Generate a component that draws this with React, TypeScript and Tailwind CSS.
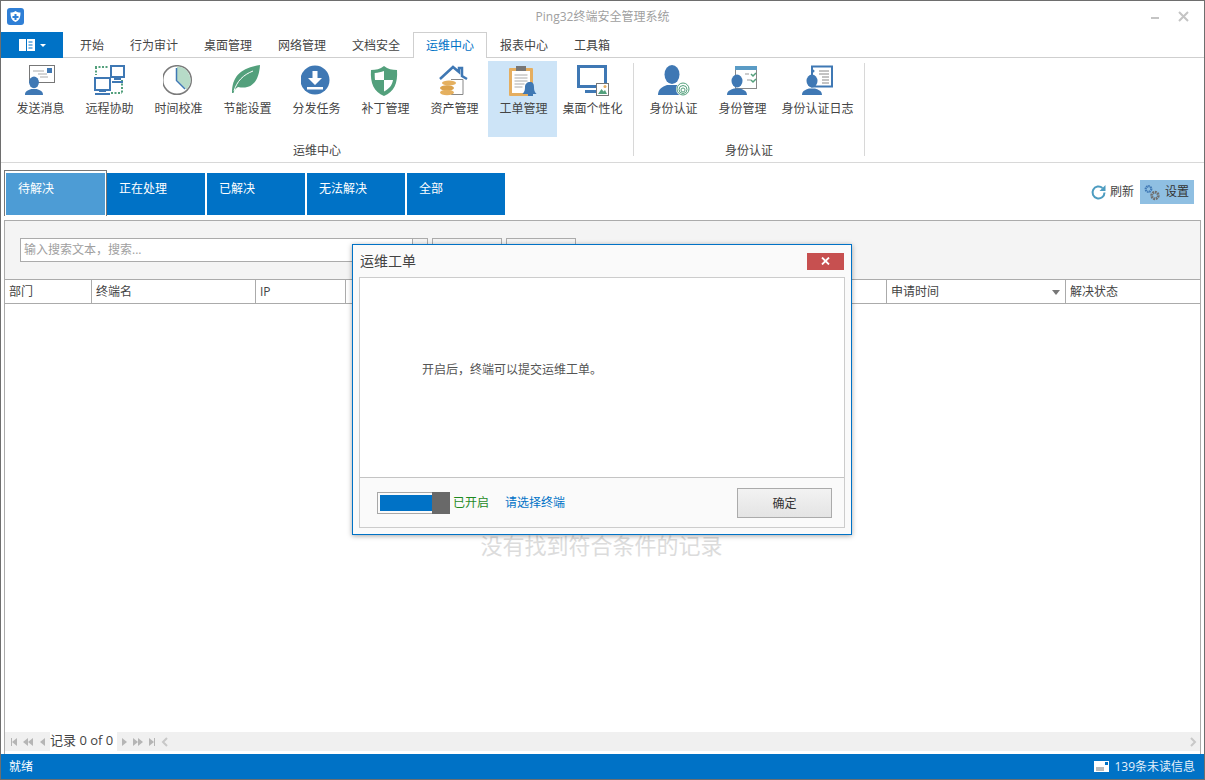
const FONT = "font-['Open_Sans','Noto_Sans_CJK_SC',sans-serif]";

const tabs = [
  { label: "开始", w: "w-[50px]" },
  { label: "行为审计", w: "w-[74px]" },
  { label: "桌面管理", w: "w-[74px]" },
  { label: "网络管理", w: "w-[74px]" },
  { label: "文档安全", w: "w-[74px]" },
  { label: "运维中心", w: "w-[74px]", active: true },
  { label: "报表中心", w: "w-[74px]" },
  { label: "工具箱", w: "w-[62px]" },
];

const BLUE = "#3f78b4";
const GREEN = "#53a07c";

function Person({ x = 0, y = 0, s = 1 }: { x?: number; y?: number; s?: number }) {
  return (
    <g transform={`translate(${x} ${y}) scale(${s})`}>
      <ellipse cx="10" cy="7" rx="5.500" ry="6.500" fill={BLUE} />
      <path d="M0 21c0-4 3-5 7-6.500h6c4 1.500 7 2.500 7 6.500z" fill={BLUE} />
    </g>
  );
}

function IconMessage() {
  return (
    <svg width="32" height="32" viewBox="0 0 32 32">
      <rect x="4.500" y="0.500" width="25" height="17" fill="#fff" stroke="#777" />
      <rect x="22" y="3" width="5" height="5" fill={BLUE} />
      <path d="M8 6h11M13 9h9M15 12h8" stroke="#aaa" />
      <Person x="0" y="11" s={0.9} />
    </svg>
  );
}

function IconRemote() {
  return (
    <svg width="32" height="32" viewBox="0 0 32 32">
      <path d="M1 2h14M2 2v8M28 15v14M17 28h11" stroke={GREEN} strokeWidth="2" strokeDasharray="2 1.500" fill="none" />
      <rect x="17" y="1" width="13" height="11" fill="#fff" stroke={BLUE} strokeWidth="2" />
      <path d="M20 13h7v2h-7zM18 16h11v2H18z" fill={BLUE} />
      <rect x="1" y="13" width="15" height="12" fill="#fff" stroke={BLUE} strokeWidth="2" />
      <path d="M5 26h7v1H5zM1 28h15v2H1z" fill={BLUE} />
    </svg>
  );
}

function IconClock() {
  return (
    <svg width="32" height="32" viewBox="0 0 32 32">
      <circle cx="14" cy="15" r="14.300" fill="#fff" stroke="#7b7b7b" strokeWidth="1.500" />
      <path d="M14 1.500a13.500 13.500 0 0 1 9.500 23L14 15z" fill="#b7dbc8" />
      <path d="M13.500 3v12.500L22 24" fill="none" stroke={BLUE} strokeWidth="1.500" />
    </svg>
  );
}

function IconLeaf() {
  return (
    <svg width="32" height="32" viewBox="0 0 32 32">
      <path d="M0 28C0 11 9 3 28 0c-1 16-8 25-22 22C3 24 2 26 1.500 28z" fill={GREEN} />
      <path d="M2 26C5 16 11 10 21 6" stroke="#fff" strokeWidth="1" fill="none" />
    </svg>
  );
}

function IconDownload() {
  return (
    <svg width="32" height="32" viewBox="0 0 32 32">
      <g transform="translate(-2 -1)">
        <circle cx="16" cy="16" r="14.500" fill={BLUE} />
        <path d="M13.500 7h5v7h4.500l-7 7-7-7h4.500zM8 23h16v2.500H8z" fill="#fff" />
      </g>
    </svg>
  );
}

function IconShield() {
  return (
    <svg width="32" height="32" viewBox="0 0 32 32">
      <g transform="translate(-2 0)">
        <path d="M16 1c4 3 8 4 13 4 1 13-3 22-13 26C6 27 2 18 3 5c5 0 9-1 13-4z" fill={GREEN} />
        <path d="M16 6v9H7c-.3-3-.3-5-.3-7 3.500-.3 6.300-.8 9.300-2zM16 15h9c-.7 5-3.800 9-9 11.500z" fill="#fff" />
      </g>
    </svg>
  );
}

function IconAsset() {
  return (
    <svg width="32" height="32" viewBox="0 0 32 32">
      <g transform="translate(-2 0)">
        <path d="M3 14L16 2l6 5V3h3v8l5 3" fill="none" stroke={BLUE} strokeWidth="2.500" />
        <path d="M14 14.500h12v15H14" fill="none" stroke="#888" />
        <ellipse cx="12" cy="18" rx="7" ry="2.500" fill="#e5b05f" />
        <ellipse cx="10" cy="23" rx="7" ry="2.800" fill="#dba24c" />
        <ellipse cx="10" cy="27.500" rx="7" ry="2.800" fill="#e5b05f" />
      </g>
    </svg>
  );
}

function IconTicket() {
  return (
    <svg width="32" height="32" viewBox="0 0 32 32">
      <rect x="1" y="3" width="24" height="28" rx="1" fill="#e5ae60" />
      <rect x="4" y="6" width="18" height="22" fill="#fff" />
      <rect x="8" y="1" width="10" height="5" fill="#777" />
      <path d="M6.500 10h13M6.500 13h13M6.500 16h13M6.500 19h10M6.500 22h8" stroke="#aaa" />
      <path d="M22 17c3 0 4 2 4 5 0 4 1 5 2.500 7h-14c1.500-2 2.500-3 2.500-7 0-3 2-5 5-5z" fill={BLUE} />
      <rect x="20" y="29" width="5" height="2" fill={BLUE} />
    </svg>
  );
}

function IconDesktop() {
  return (
    <svg width="32" height="32" viewBox="0 0 32 32">
      <rect x="1.500" y="1.500" width="27" height="20" fill="#fff" stroke={BLUE} strokeWidth="3" />
      <path d="M8 25h12v3H8z" fill={BLUE} />
      <rect x="19.500" y="18.500" width="12" height="12" fill="#fff" stroke="#777" />
      <circle cx="28" cy="21.500" r="1.500" fill="#e5ae60" />
      <path d="M21 29l3.500-5 2 2.500 1.500-1.500 2 4z" fill={GREEN} />
    </svg>
  );
}

function IconAuth() {
  return (
    <svg width="32" height="32" viewBox="0 0 32 32">
      <ellipse cx="14" cy="9.500" rx="7.500" ry="9.500" fill={BLUE} />
      <path d="M0 30c0-6 4-8 9-10h10l3 2v8z" fill={BLUE} />
      <circle cx="25" cy="24" r="7" fill="#fff" />
      <g fill="none" stroke={GREEN} strokeWidth="1">
        <circle cx="25" cy="24" r="6" />
        <circle cx="25" cy="24.500" r="4" />
        <circle cx="25" cy="25" r="2" />
      </g>
    </svg>
  );
}

function IconManage() {
  return (
    <svg width="32" height="32" viewBox="0 0 32 32">
      <rect x="8.500" y="1.500" width="21" height="22" fill="#fff" stroke="#888" />
      <rect x="8" y="1" width="22" height="4" fill="#5a9bc5" />
      <path d="M18 9h4M20 15h4" stroke="#999" />
      <path d="M24 9l2 2 3-3M24 15l2 2 3-3" stroke={GREEN} strokeWidth="1.500" fill="none" />
      <Person x="0" y="9" />
    </svg>
  );
}

function IconLog() {
  return (
    <svg width="32" height="32" viewBox="0 0 32 32">
      <rect x="10" y="1.500" width="20" height="20" fill="#fff" stroke={BLUE} strokeWidth="2" />
      <path d="M17 6h10M17 9h10M20 12h7M20 15h7M20 18h7" stroke="#888" />
      <circle cx="11" cy="6" r="1.500" fill={BLUE} />
      <Person x="0" y="9" />
    </svg>
  );
}

const ribbon1 = [
  { label: "发送消息", icon: <IconMessage /> },
  { label: "远程协助", icon: <IconRemote /> },
  { label: "时间校准", icon: <IconClock /> },
  { label: "节能设置", icon: <IconLeaf /> },
  { label: "分发任务", icon: <IconDownload /> },
  { label: "补丁管理", icon: <IconShield /> },
  { label: "资产管理", icon: <IconAsset /> },
  { label: "工单管理", icon: <IconTicket />, active: true },
  { label: "桌面个性化", icon: <IconDesktop /> },
];

const ribbon2 = [
  { label: "身份认证", icon: <IconAuth />, w: "w-[69px]" },
  { label: "身份管理", icon: <IconManage />, w: "w-[69px]" },
  { label: "身份认证日志", icon: <IconLog />, w: "w-[81px]" },
];

const states = ["待解决", "正在处理", "已解决", "无法解决", "全部"];

const columns = [
  { label: "部门", w: "w-[87px]" },
  { label: "终端名", w: "w-[164px]" },
  { label: "IP", w: "w-[90px]" },
  { label: "", w: "w-[541px]" },
  { label: "申请时间", w: "w-[179px]", sort: true },
  { label: "解决状态", w: "flex-1" },
];

function RibbonButton({ label, icon, active, w = "w-[69px]" }: { label: string; icon: React.ReactNode; active?: boolean; w?: string }) {
  return (
    <div className={`${w} h-[76px] flex flex-col items-center pt-[4px] shrink-0 ${active ? "bg-[#cde4f7] ml-[-1px] mr-[1px] pl-[2px]" : ""}`}>
      <div className="h-[32px] w-[32px]">{icon}</div>
      <div className="mt-0 text-[12px] leading-[24px] whitespace-nowrap text-[#444]">{label}</div>
    </div>
  );
}

function Triangle({ dir }: { dir: "l" | "r" }) {
  return (
    <span
      className={`w-0 h-0 border-y-[4px] border-y-transparent ${dir === "l" ? "border-r-[5px] border-r-[#b5b5b5]" : "border-l-[5px] border-l-[#b5b5b5]"}`}
    />
  );
}

function NavGlyph({ dir, count, bar }: { dir: "l" | "r"; count: number; bar?: boolean }) {
  return (
    <span className="w-[14px] flex items-center justify-center">
      {bar && dir === "l" && <span className="w-px h-[8px] bg-[#b5b5b5]" />}
      {Array.from({ length: count }).map((_, i) => (
        <Triangle key={i} dir={dir} />
      ))}
      {bar && dir === "r" && <span className="w-px h-[8px] bg-[#b5b5b5]" />}
    </span>
  );
}

export default function App() {
  return (
    <div className={`${FONT} relative w-[1205px] h-[780px] overflow-hidden bg-white border border-[#6e6e6e] flex flex-col text-[12px] text-[#444]`}>
      {/* title bar */}
      <div className="relative h-[31px] shrink-0 flex items-center justify-center">
        <svg className="absolute left-[6px] top-[7px]" width="17" height="17" viewBox="0 0 17 17">
          <rect width="17" height="17" rx="3" fill="#2f7fd6" />
          <path d="M8.500 3c1.500 1 3 1.500 5 1.500 0 4.500-1 8-5 9.500-4-1.500-5-5-5-9.500 2 0 3.500-.5 5-1.500z" fill="#fff" />
          <path d="M7.500 6h2v2h2v2h-2v2h-2v-2h-2V8h2z" fill="#2f7fd6" />
        </svg>
        <span className="text-[12px] text-[#a0a0a0]">Ping32终端安全管理系统</span>
        <span className="absolute right-[45px] top-[16px] w-[8px] h-[2px] bg-[#c4c4c4]" />
        <svg className="absolute right-[15px] top-[10px]" width="11" height="11" viewBox="0 0 11 11">
          <path d="M1 1l9 9M10 1l-9 9" stroke="#c4c4c4" strokeWidth="2" />
        </svg>
      </div>

      {/* ribbon tabs */}
      <div className="h-[26px] shrink-0 flex border-b border-[#cfcfcf]">
        <div className="w-[62px] h-[26px] bg-[#0072c6] flex items-center justify-center gap-[3px]">
          <svg width="18" height="12" viewBox="0 0 18 12">
            <rect x="0.500" y="0.500" width="15" height="11" fill="#fff" stroke="#fff" />
            <path d="M7.500 0v12" stroke="#0072c6" />
            <path d="M9.500 3h4M9.500 6h4M9.500 9h4" stroke="#0072c6" />
          </svg>
          <span className="w-0 h-0 border-x-[3px] border-x-transparent border-t-[3px] border-t-white" />
        </div>
        <div className="w-[4px]" />
        {tabs.map((t) => (
          <div
            key={t.label}
            className={`${t.w} h-[26px] text-center ${t.active ? "bg-white text-[#0072c6] border border-b-0 border-[#cfcfcf] leading-[26px] relative z-10" : "text-[#444] leading-[27px]"}`}
          >
            {t.label}
          </div>
        ))}
      </div>

      {/* ribbon */}
      <div className="h-[105px] shrink-0 flex pl-[5px] border-b border-[#d8d8d8]">
        <div className="flex flex-col w-[627px] shrink-0">
          <div className="flex h-[79px] pt-[3px]">
            {ribbon1.map((r) => (
              <RibbonButton key={r.label} {...r} />
            ))}
          </div>
          <div className="text-center leading-[24px] mt-[2px] pr-[5px]">运维中心</div>
        </div>
        <div className="w-px h-[93px] mt-[5px] bg-[#d8d8d8]" />
        <div className="flex flex-col w-[230px] shrink-0">
          <div className="flex h-[79px] pt-[3px] pl-[5px]">
            {ribbon2.map((r) => (
              <RibbonButton key={r.label} {...r} />
            ))}
          </div>
          <div className="text-center leading-[24px] mt-[2px]">身份认证</div>
        </div>
        <div className="w-px h-[93px] mt-[5px] bg-[#d8d8d8]" />
      </div>

      {/* status tabs and actions */}
      <div className="h-[57px] shrink-0 flex items-start pl-[3px] pr-[10px]">
        <div className="mt-[7px] border-t border-l border-r border-[#777] h-[46px] w-[103px] absolute" />
        <div className="flex gap-[2px] mt-[10px] ml-[2px]">
          {states.map((s, i) => (
            <div
              key={s}
              className={`${i === 0 ? "w-[99px] bg-[#4d9cd5]" : "w-[98px] bg-[#0072c6]"} h-[42px] pl-[12px] pt-[6px] leading-[20px] text-white`}
            >
              {s}
            </div>
          ))}
        </div>
        <div className="ml-auto mt-[17px] flex items-center">
          <svg width="17" height="17" viewBox="0 0 17 17">
            <path d="M14.500 8.500a6 6 0 1 1-2-4.500" fill="none" stroke="#4d9cc0" strokeWidth="2" />
            <path d="M15.500 1v6h-6z" fill="#4d9cc0" />
          </svg>
          <span className="ml-[3px] w-[27px]">刷新</span>
          <div className="ml-[3px] w-[54px] h-[24px] bg-[#8fbfe2] flex items-center pl-[4px] gap-[5px]">
            <svg width="16" height="17" viewBox="0 0 16 17">
              <circle cx="4.500" cy="5" r="2.800" fill="none" stroke={BLUE} strokeWidth="2.200" strokeDasharray="1.500 0.600" />
              <circle cx="11" cy="11.500" r="3.300" fill="none" stroke="#6f6f6f" strokeWidth="2.800" strokeDasharray="1.800 0.700" />
            </svg>
            <span className="text-[#333]">设置</span>
          </div>
        </div>
      </div>

      {/* grid */}
      <div className="flex-1 mx-[3px] border border-[#ababab] border-b-0 flex flex-col min-h-0 relative">
        <div className="h-[59px] shrink-0 bg-[#f4f4f4] flex items-start pl-[15px] pt-[17px] border-b border-[#ababab]">
          <div className="w-[393px] h-[24px] bg-white border border-[#ababab] pl-[3px] leading-[21px] text-[#a0a0a0]">输入搜索文本，搜索...</div>
          <div className="w-[15px] h-[24px] border border-l-0 border-[#ababab]" />
          <div className="ml-[4px] w-[70px] h-[24px] border border-[#ababab]" />
          <div className="ml-[4px] w-[70px] h-[24px] border border-[#ababab]" />
        </div>
        <div className="h-[24px] shrink-0 flex border-b border-[#ababab]">
          {columns.map((c) => (
            <div key={c.label || "x"} className={`${c.w} h-full shrink-0 flex items-center pl-[4px] pr-[8px] pt-[1px] border-r border-[#ababab] last:border-r-0 text-[#444]`}>
              <span>{c.label}</span>
              {c.sort && <span className="ml-auto mr-[-3px] w-0 h-0 border-x-[4px] border-x-transparent border-t-[5px] border-t-[#777]" />}
            </div>
          ))}
        </div>
        <div className="flex-1 flex justify-center pt-[226px]">
          <span className="text-[22px] leading-[30px] text-[#dcdcdc] mr-[2px]">没有找到符合条件的记录</span>
        </div>
        <div className="h-[19px] mb-[3px] shrink-0 flex items-center bg-[#f0f0f0]">
          <div className="w-[45px] pl-[2px] flex">
            <NavGlyph dir="l" count={1} bar />
            <NavGlyph dir="l" count={2} />
            <NavGlyph dir="l" count={1} />
          </div>
          <div className="w-[67px] h-full bg-white leading-[17px] text-[13px] text-[#444] whitespace-nowrap">记录 0 of 0</div>
          <div className="w-[42px] flex">
            <NavGlyph dir="r" count={1} />
            <NavGlyph dir="r" count={2} />
            <NavGlyph dir="r" count={1} bar />
          </div>
          <svg className="ml-[2px]" width="8" height="10" viewBox="0 0 8 10">
            <path d="M6 1L2 5l4 4" fill="none" stroke="#c8c8c8" strokeWidth="2" />
          </svg>
          <svg className="ml-auto mr-[3px]" width="8" height="10" viewBox="0 0 8 10">
            <path d="M2 1l4 4-4 4" fill="none" stroke="#c8c8c8" strokeWidth="2" />
          </svg>
        </div>
      </div>

      {/* status bar */}
      <div className="h-[25px] shrink-0 bg-[#0072c6] text-white flex items-center pl-[8px] pr-[9px]">
        <span>就绪</span>
        <svg className="ml-auto" width="15" height="11" viewBox="0 0 15 11">
          <rect width="15" height="11" fill="#fff" />
          <rect x="11" y="1" width="3" height="3" fill="#0072c6" />
          <path d="M2 7h8M2 9h8" stroke="#777" />
        </svg>
        <span className="ml-[5px] text-[12px] text-[#e4f0fa]">139条未读信息</span>
      </div>

      {/* dialog */}
      <div className="absolute left-[351px] top-[243px] w-[500px] h-[291px] bg-[#fafafa] border border-[#0072c6] shadow-[0_1px_5px_rgba(0,0,0,0.35)] flex flex-col px-[6px] pb-[6px]">
        <div className="h-[32px] shrink-0 flex items-center">
          <span className="text-[14px] text-[#444] ml-px mt-[-2px]">运维工单</span>
          <div className="ml-auto mr-px w-[37px] h-[17px] bg-[#c75050] flex items-center justify-center">
            <svg width="9" height="8" viewBox="0 0 9 8">
              <path d="M1 .5l7 7M8 .5l-7 7" stroke="#fff" strokeWidth="1.800" />
            </svg>
          </div>
        </div>
        <div className="flex-1 border border-[#cccccc] bg-white flex flex-col min-h-0">
          <div className="h-[200px] shrink-0 flex items-start pl-[62px] pt-[83px] border-b border-[#c4c4c4]">
            <span className="text-[#555]">开启后，终端可以提交运维工单。</span>
          </div>
          <div className="flex-1 bg-[#fafafa] flex items-center pl-[17px] pr-[12px]">
            <div className="w-[73px] h-[22px] flex border border-[#a8a8a8] items-center pl-[2px] relative">
              <div className="w-[52px] h-[16px] bg-[#0072c6]" />
              <div className="absolute right-[-1px] top-[-1px] w-[18px] h-[22px] bg-[#696969]" />
            </div>
            <span className="ml-[3px] text-[#1f8a1f]">已开启</span>
            <span className="ml-[16px] text-[#0072c6]">请选择终端</span>
            <div className="ml-auto w-[95px] h-[30px] mt-[1px] border border-[#ababab] bg-gradient-to-b from-[#f2f2f2] to-[#e4e4e4] text-center leading-[29px] text-[#333]">确定</div>
          </div>
        </div>
      </div>
    </div>
  );
}
